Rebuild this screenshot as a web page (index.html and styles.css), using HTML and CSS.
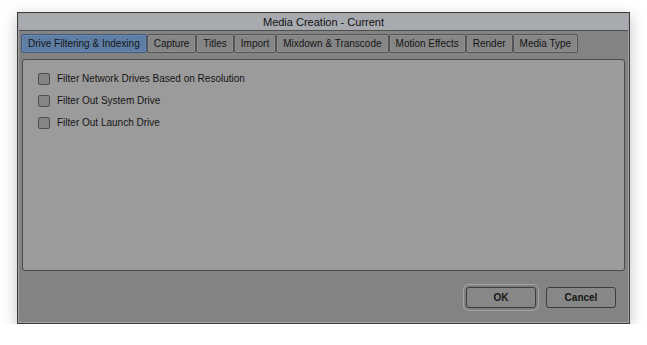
FILE: index.html
```html
<!DOCTYPE html>
<html lang="en">
<head>
    <meta charset="UTF-8">
    <title>Media Creation - Current</title>
    <link rel="stylesheet" href="styles.css">
</head>
<body>
    <div class="window">
        <div class="titlebar">Media Creation - Current</div>
        <div class="tabs">
            <div class="tab active">Drive Filtering &amp; Indexing</div>
            <div class="tab">Capture</div>
            <div class="tab">Titles</div>
            <div class="tab">Import</div>
            <div class="tab">Mixdown &amp; Transcode</div>
            <div class="tab">Motion Effects</div>
            <div class="tab">Render</div>
            <div class="tab">Media Type</div>
        </div>
        <div class="panel">
            <label class="option"><span class="box"></span>Filter Network Drives Based on Resolution</label>
            <label class="option"><span class="box"></span>Filter Out System Drive</label>
            <label class="option"><span class="box"></span>Filter Out Launch Drive</label>
        </div>
        <div class="buttons">
            <button class="btn default">OK</button>
            <button class="btn">Cancel</button>
        </div>
    </div>
</body>
</html>
```

FILE: styles.css
```css
body {
    margin: 0;
    padding: 12px 0 0 17px;
    background: #fff;
    font-family: "Liberation Sans", Arial, sans-serif;
    font-size: 10px;
    color: #151515;
}
.window {
    width: 611px;
    height: 310px;
    border: 1px solid #3c3c3c;
    box-shadow: inset 0 0 0 1px #a2a2a2, 0 4px 14px rgba(0, 0, 0, 0.25);
    background: #838383;
    display: flex;
    flex-direction: column;
}
.titlebar {
    height: 16px;
    line-height: 16px;
    margin: 1px 1px 0 1px;
    background: #a7aaaf;
    border-bottom: 1px solid #4e4e4e;
    text-align: center;
    font-size: 11px;
    color: #111;
}
.tabs {
    display: flex;
    margin: 3px 0 0 3px;
    height: 19px;
}
.tab {
    box-sizing: border-box;
    flex-shrink: 0;
    white-space: nowrap;
    height: 19px;
    line-height: 17px;
    padding: 0 6px;
    border: 1px solid #545454;
    background: #868686;
    box-shadow: inset 0 0 0 1px #8f8f8f;
    border-radius: 2px;
}
.tab.active {
    background: #5e7ea5;
    border-color: #3f5a7b;
    box-shadow: inset 0 0 0 1px #6a89ae;
}
.panel {
    margin: 6px 4px 0 4px;
    height: 197px;
    background: #9b9b9b;
    border: 1px solid #4b4b4b;
    border-radius: 3px;
    padding: 13px 0 0 15px;
    display: flex;
    flex-direction: column;
    gap: 10px;
}
.option {
    display: flex;
    align-items: center;
    gap: 7px;
    height: 12px;
    line-height: 12px;
}
.box {
    box-sizing: border-box;
    width: 12px;
    height: 12px;
    border: 1px solid #4e4e4e;
    border-radius: 2px;
    background: #858585;
}
.buttons {
    display: flex;
    justify-content: flex-end;
    gap: 10px;
    margin: 16px 13px 0 0;
}
.btn {
    box-sizing: border-box;
    width: 70px;
    height: 21px;
    border: 1px solid #3c3c3c;
    border-radius: 3px;
    background: #878787;
    font-family: "Liberation Sans", Arial, sans-serif;
    font-size: 10px;
    font-weight: bold;
    color: #151515;
    padding: 0;
}
.btn.default {
    box-shadow: 0 0 0 2px #7e7e7e, 0 0 0 3px #a5a5a5;
}
```
